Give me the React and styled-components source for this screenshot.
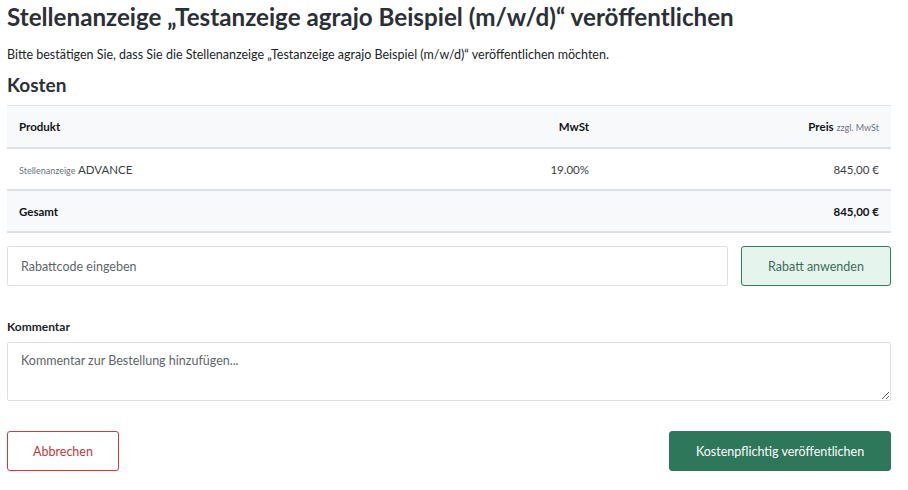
import React from "react";
import styled, { createGlobalStyle } from "styled-components";

const GlobalStyle = createGlobalStyle`
  body {
    margin: 0;
    background: #ffffff;
    font-family: Lato, "Noto Sans", sans-serif;
    color: #212529;
  }
`;

function App() {
  return (
    <>
      <GlobalStyle />
      <Page>
        <Title>Stellenanzeige „Testanzeige agrajo Beispiel (m/w/d)“ veröffentlichen</Title>
        <Intro>
          Bitte bestätigen Sie, dass Sie die Stellenanzeige „Testanzeige agrajo Beispiel (m/w/d)“
          veröffentlichen möchten.
        </Intro>
        <SectionTitle>Kosten</SectionTitle>
        <Table>
          <thead>
            <tr>
              <HeadCell>Produkt</HeadCell>
              <HeadCell $align="right">MwSt</HeadCell>
              <HeadCell $align="right">
                Preis <Small>zzgl. MwSt</Small>
              </HeadCell>
            </tr>
          </thead>
          <tbody>
            <tr>
              <Cell>
                <Small>Stellenanzeige</Small> ADVANCE
              </Cell>
              <Cell $align="right">19.00%</Cell>
              <Cell $align="right">845,00 €</Cell>
            </tr>
            <TotalRow>
              <Cell $bold>Gesamt</Cell>
              <Cell />
              <Cell $align="right" $bold>
                845,00 €
              </Cell>
            </TotalRow>
          </tbody>
        </Table>

        <DiscountRow>
          <TextInput placeholder="Rabattcode eingeben" />
          <Button $variant="soft">Rabatt anwenden</Button>
        </DiscountRow>

        <Label>Kommentar</Label>
        <TextArea placeholder="Kommentar zur Bestellung hinzufügen..." />

        <Actions>
          <Button $variant="danger">Abbrechen</Button>
          <Button $variant="primary">Kostenpflichtig veröffentlichen</Button>
        </Actions>
      </Page>
    </>
  );
}
export default App;

const Page = styled.div`
  width: 884px;
  padding: 0 17px 0 7px;
  display: flex;
  flex-direction: column;
`;

const Title = styled.h1`
  margin: 2px 0 0;
  font-size: 24.2px;
  line-height: 30px;
  font-weight: 700;
  color: #2b3036;
`;

const Intro = styled.p`
  margin: 14px 0 0;
  font-size: 12.5px;
  line-height: 18px;
  color: #212529;
`;

const SectionTitle = styled.h2`
  margin: 9px 0 0;
  font-size: 19px;
  line-height: 24px;
  font-weight: 700;
  color: #2b3036;
`;

const Table = styled.table`
  margin-top: 8px;
  width: 100%;
  border-collapse: collapse;
  border-top: 1px solid #dde1e6;
  font-size: 11.5px;

  thead tr {
    background: #f8f9fb;
  }
`;

const TotalRow = styled.tr`
  background: #f8f9fb;
`;

const HeadCell = styled.th`
  height: 41px;
  padding: 0 12px;
  text-align: ${(p) => p.$align || "left"};
  font-weight: 700;
  color: #111418;
  border-bottom: 2px solid #dde1e6;
  &:nth-child(2) {
    width: 260px;
  }
  &:nth-child(3) {
    width: 266px;
  }
`;

const Cell = styled.td`
  height: 40px;
  padding: 0 12px;
  text-align: ${(p) => p.$align || "left"};
  font-weight: ${(p) => (p.$bold ? 700 : 400)};
  color: ${(p) => (p.$bold ? "#111418" : "#3a3f45")};
  border-bottom: 2px solid #dde1e6;
`;

const Small = styled.span`
  font-size: 9px;
  font-weight: 400;
  color: #6c757d;
`;

const DiscountRow = styled.div`
  margin-top: 13px;
  display: flex;
  gap: 13px;
`;

const TextInput = styled.input`
  flex: 1;
  height: 40px;
  box-sizing: border-box;
  padding: 0 13px;
  border: 1px solid #dde1e6;
  border-radius: 2px;
  font-family: Lato, "Noto Sans", sans-serif;
  font-size: 12.5px;
  color: #333;
  outline: none;
  &::placeholder {
    color: #5f656b;
  }
`;

const Label = styled.label`
  margin-top: 33px;
  font-size: 12px;
  font-weight: 700;
  color: #212529;
`;

const TextArea = styled.textarea`
  margin-top: 8px;
  height: 59px;
  box-sizing: border-box;
  padding: 10px 13px;
  border: 1px solid #dde1e6;
  border-radius: 2px;
  font-family: Lato, "Noto Sans", sans-serif;
  font-size: 12.5px;
  outline: none;
  &::placeholder {
    color: #5f656b;
  }
`;

const variants = {
  soft: `
    width: 150px;
    background: #e5f4ec;
    border: 1px solid #2f7a5c;
    color: #3b6e5a;
  `,
  danger: `
    width: 112px;
    background: #ffffff;
    border: 1px solid #d23a3a;
    color: #c2393c;
  `,
  primary: `
    width: 222px;
    background: #2e775b;
    border: 1px solid #2e775b;
    color: #ffffff;
  `,
};

const Button = styled.button`
  height: 40px;
  box-sizing: border-box;
  border-radius: 3px;
  font-family: Lato, "Noto Sans", sans-serif;
  font-size: 12.5px;
  cursor: pointer;
  ${(p) => variants[p.$variant]}
`;

const Actions = styled.div`
  margin-top: 30px;
  display: flex;
  justify-content: space-between;
`;
